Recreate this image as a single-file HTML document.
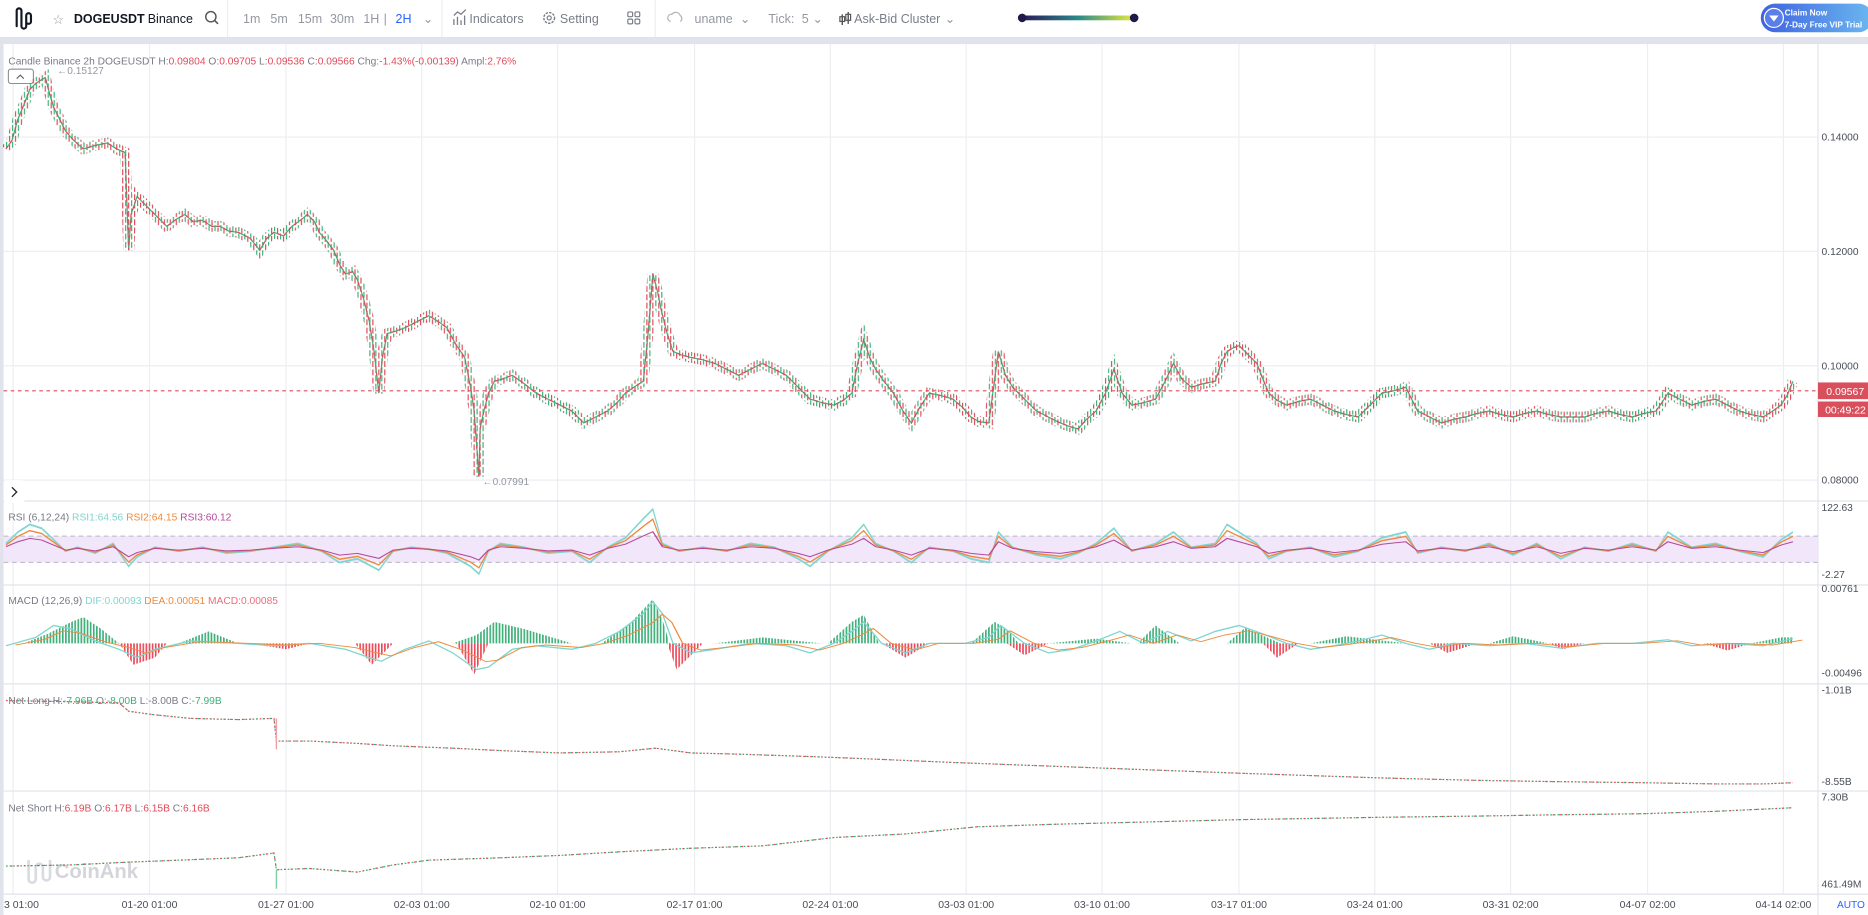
<!DOCTYPE html>
<html><head><meta charset="utf-8"><style>
html,body{margin:0;padding:0;background:#fff;width:1868px;height:915px;overflow:hidden}
svg{display:block}
text{font-family:"Liberation Sans",sans-serif}
</style></head><body>
<svg width="1868" height="915" viewBox="0 0 1568 768" xmlns="http://www.w3.org/2000/svg">
<defs>
<linearGradient id="gb" x1="0" x2="1"><stop offset="0" stop-color="#2b1a5a"/><stop offset=".5" stop-color="#2a8a8a"/><stop offset="1" stop-color="#e8ea3a"/></linearGradient>
<linearGradient id="cl" x1="0" x2="1"><stop offset="0" stop-color="#3f62e0"/><stop offset="1" stop-color="#6bb8f0"/></linearGradient>
<pattern id="pg" width="2.6" height="10" patternUnits="userSpaceOnUse"><rect width="1.4" height="10" fill="#3fb07a"/></pattern>
<pattern id="pr" width="2.6" height="10" patternUnits="userSpaceOnUse"><rect width="1.4" height="10" fill="#ea4a5a"/></pattern>
<pattern id="pc" width="5" height="7" patternUnits="userSpaceOnUse"><rect x="0" y="0" width="1" height="5" fill="#3fb07a"/><rect x="2.5" y="2" width="1" height="5" fill="#e04b5a"/></pattern>
<path id="rsi" d="M5,458 L15,452 25,448 35,450 45,456 55,462 65,460 80,463 95,458 108,470 115,465 130,460 150,462 170,460 190,463 210,462 230,460 250,458 270,462 285,468 300,466 318,472 330,462 345,460 360,461 375,463 395,470 402,474 410,462 420,458 440,460 460,463 480,462 495,468 510,460 525,455 540,445 548,440 556,458 570,462 590,460 610,462 630,458 650,460 670,466 680,470 695,462 715,455 725,448 735,458 750,462 765,468 780,460 800,462 815,466 830,468 838,452 850,460 870,464 890,466 905,463 920,458 935,450 950,462 970,458 985,452 1000,460 1020,458 1030,448 1040,452 1055,458 1065,466 1080,462 1100,460 1120,465 1140,462 1160,455 1180,452 1190,463 1210,460 1230,462 1250,458 1270,464 1290,458 1310,466 1330,460 1350,462 1370,458 1390,462 1400,452 1420,460 1440,458 1460,462 1480,465 1495,456 1505,452" fill="none"/>
<path id="dif" d="M5,542 L30,535 45,525 60,528 80,538 100,545 115,552 130,545 160,538 200,540 230,542 260,540 290,545 310,552 320,555 340,545 360,538 380,548 400,562 410,560 430,545 450,542 480,545 500,540 520,530 540,515 548,505 556,515 565,540 580,548 600,545 630,540 660,542 680,548 700,540 715,530 725,522 740,540 760,548 780,540 810,540 830,535 840,525 860,540 880,548 900,545 920,538 940,530 960,540 980,530 1000,538 1020,530 1040,525 1060,532 1080,540 1100,545 1120,542 1140,538 1160,533 1180,540 1200,545 1220,540 1250,542 1280,540 1310,544 1340,540 1370,540 1400,537 1420,542 1450,540 1480,542 1505,536" fill="none"/>
<path id="price" d="M5,125 L10,118 15,100 20,88 25,75 30,70 38,65 42,80 45,90 50,100 55,110 62,118 70,125 80,122 90,120 98,125 105,128 108,210 110,180 115,165 125,175 132,182 140,190 148,184 155,180 162,186 170,185 178,190 185,190 192,194 200,195 210,200 218,210 224,200 230,195 238,198 245,190 252,185 258,180 264,186 268,195 274,202 280,210 285,222 290,230 296,228 300,235 305,250 310,270 314,295 318,330 321,300 325,280 332,278 340,275 350,270 360,265 368,270 375,275 382,288 390,300 395,325 398,345 402,400 403,360 405,350 410,330 415,320 422,318 430,315 440,322 450,330 460,335 470,340 480,345 490,355 500,350 510,345 518,338 525,330 532,325 540,320 544,280 548,230 552,245 555,260 560,280 565,295 572,298 580,300 590,302 600,305 610,310 620,315 630,310 640,305 650,310 660,315 670,325 680,335 690,338 700,340 708,336 715,330 720,305 725,285 730,300 735,310 742,320 750,330 758,345 765,355 772,342 780,330 790,332 800,335 808,342 815,350 822,354 830,355 834,325 838,295 844,315 850,325 860,335 870,345 880,350 890,355 898,358 905,360 912,352 920,345 928,330 935,310 942,330 950,340 960,338 970,335 978,320 985,305 992,318 1000,325 1010,322 1020,320 1025,305 1030,295 1035,292 1040,290 1048,298 1055,305 1060,318 1065,330 1072,336 1080,340 1090,337 1100,335 1110,340 1120,345 1130,348 1140,350 1150,340 1160,330 1170,328 1180,325 1185,335 1190,345 1200,350 1210,355 1220,352 1230,350 1240,347 1250,345 1260,348 1270,350 1280,347 1290,345 1300,348 1310,350 1320,350 1330,350 1340,347 1350,345 1360,348 1370,350 1380,347 1390,345 1395,338 1400,330 1410,335 1420,340 1430,337 1440,335 1450,340 1460,345 1470,348 1480,350 1488,345 1495,340 1500,332 1505,320" fill="none"/>
</defs>
<rect width="1568" height="768" fill="#fff"/>
<!-- toolbar -->
<rect x="0" y="31" width="1568" height="6" fill="#e0e3eb"/>
<rect x="0" y="37" width="3" height="731" fill="#e0e3eb"/>
<g fill="none" stroke="#131722" stroke-width="1.8" stroke-linecap="round">
<path d="M14,9 v13 M18,9 v13 M14,9 a2,2 0 0 1 4,0 M18,22 a2,2 0 0 0 4,0 v-9 a2,2 0 0 1 4,0 v5 a2,2 0 0 1 -4,0"/>
</g>
<text x="44" y="20" font-size="11" fill="#9598a1">☆</text>
<text x="62" y="19.5" font-size="10.5" font-weight="bold" fill="#131722">DOGEUSDT</text>
<text x="124" y="19.5" font-size="10.5" fill="#131722">Binance</text>
<circle cx="177" cy="14" r="4.3" fill="none" stroke="#555" stroke-width="1.2"/><path d="M180,17 l3,3" stroke="#555" stroke-width="1.3"/>
<line x1="191" y1="0" x2="191" y2="31" stroke="#eceef2"/>
<g font-size="10.5" fill="#9598a1">
<text x="204" y="19.5">1m</text><text x="227" y="19.5">5m</text><text x="250" y="19.5">15m</text><text x="277" y="19.5">30m</text><text x="305" y="19.5">1H</text><text x="322" y="19.5">|</text>
<text x="332" y="19.5" fill="#2962ff">2H</text><text x="355" y="19.5">⌄</text>
</g>
<line x1="371" y1="0" x2="371" y2="31" stroke="#eceef2"/>
<path d="M381,21 v-5 M384,21 v-7 M387,21 v-4 M390,21 v-8 M381,13 l3,-3 3,2 4,-4" stroke="#7a7e89" stroke-width="1.1" fill="none"/>
<text x="394" y="19.5" font-size="10.5" fill="#7a7e89">Indicators</text>
<circle cx="461" cy="15" r="4.5" fill="none" stroke="#7a7e89" stroke-width="1.2" stroke-dasharray="2 1"/><circle cx="461" cy="15" r="1.7" fill="none" stroke="#7a7e89"/>
<text x="470" y="19.5" font-size="10.5" fill="#7a7e89">Setting</text>
<g fill="none" stroke="#7a7e89" stroke-width="1"><rect x="527" y="10" width="4" height="4" rx="1"/><rect x="533" y="10" width="4" height="4" rx="1"/><rect x="527" y="16" width="4" height="4" rx="1"/><rect x="533" y="16" width="4" height="4" rx="1"/></g>
<line x1="550" y1="0" x2="550" y2="31" stroke="#eceef2"/>
<path d="M563,18 a3,3 0 0 1 1,-6 a4,4 0 0 1 7,1 a3,3 0 0 1 0,5" fill="none" stroke="#b0b3bb" stroke-width="1"/>
<g font-size="10.5" fill="#9598a1"><text x="583" y="19.5">uname</text><text x="621" y="19.5">⌄</text><text x="645" y="19.5">Tick:</text><text x="673" y="19.5">5</text><text x="682" y="19.5">⌄</text></g>
<path d="M707,12 v9 M712,10 v10" stroke="#555" stroke-width="1.2"/><rect x="705" y="14" width="4" height="4" fill="none" stroke="#555"/><rect x="710" y="12" width="4" height="5" fill="none" stroke="#555"/>
<text x="717" y="19.5" font-size="10.5" fill="#7a7e89">Ask-Bid Cluster</text><text x="793" y="19.5" font-size="10.5" fill="#9598a1">⌄</text>
<rect x="858" y="13" width="94" height="4" fill="url(#gb)"/><circle cx="858" cy="15" r="3.6" fill="#1e1a4a"/><circle cx="952" cy="15" r="3.6" fill="#1e1a4a"/>
<rect x="1478" y="3" width="94" height="24" rx="12" fill="url(#cl)"/>
<circle cx="1489" cy="15" r="8" fill="#5b7fe8" stroke="#fff" stroke-width="1"/><path d="M1485,13 h8 l-4,5 z" fill="#fff"/>
<text x="1498" y="13" font-size="7" font-weight="bold" fill="#fff">Claim Now</text><text x="1498" y="23" font-size="7" font-weight="bold" fill="#fff">7-Day Free VIP Trial</text>
<!-- grid -->
<g stroke="#eceef2" stroke-width="1">
<path d="M11,37v713 M125.5,37v713 M240,37v713 M354,37v713 M468,37v713 M583,37v713 M697,37v713 M811,37v713 M925,37v713 M1040,37v713 M1154,37v713 M1268,37v713 M1383,37v713 M1497,37v713"/>
<path d="M3,115h1523 M3,211h1523 M3,307h1523 M3,403h1523"/>
</g>
<g stroke="#e0e3eb" stroke-width="1"><path d="M3,420.5h1565 M3,491h1565 M3,574h1565 M3,664h1565 M3,750.5h1565 M1526,37v731"/></g>
<!-- main header -->
<text x="7" y="54" font-size="8.6" fill="#787b86">Candle  Binance 2h DOGEUSDT H:<tspan fill="#e04b5a">0.09804</tspan>  O:<tspan fill="#e04b5a">0.09705</tspan>  L:<tspan fill="#e04b5a">0.09536</tspan>  C:<tspan fill="#e04b5a">0.09566</tspan> Chg:<tspan fill="#e04b5a">-1.43%(-0.00139)</tspan> Ampl:<tspan fill="#e04b5a">2.76%</tspan></text>
<rect x="7" y="58" width="21" height="12" rx="2" fill="#fff" stroke="#7a7e89" stroke-width=".8"/><path d="M14,66 l3,-3 3,3" fill="none" stroke="#555" stroke-width=".9"/>
<text x="48" y="62" font-size="8.5" fill="#9598a1">←0.15127</text>
<text x="405" y="407" font-size="8.5" fill="#9598a1">←0.07991</text>
<rect x="3" y="403" width="18" height="19" rx="3" fill="#fff"/><path d="M10,409 l4,4 -4,4" fill="none" stroke="#222" stroke-width="1.1"/>
<!-- price -->
<line x1="3" y1="328" x2="1526" y2="328" stroke="#e04b5a" stroke-width=".9" stroke-dasharray="3 3"/>
<use href="#price" stroke="url(#pc)" stroke-width="9"/>
<use href="#price" stroke="#3fb07a" stroke-width="1"/>
<use href="#price" stroke="#e04b5a" stroke-width="1" stroke-dasharray="3 3"/>
<rect x="1526" y="321" width="42" height="14" fill="#d9505c"/><text x="1533" y="331.5" font-size="8.8" fill="#fff">0.09567</text>
<rect x="1526" y="337" width="42" height="13" fill="#d9505c"/><text x="1532" y="347" font-size="8.8" fill="#fff">00:49:22</text>
<g font-size="8.6" fill="#4a4e59">
<text x="1529" y="118">0.14000</text><text x="1529" y="214">0.12000</text><text x="1529" y="310">0.10000</text><text x="1529" y="406">0.08000</text>
<text x="1529" y="429">122.63</text><text x="1529" y="485">-2.27</text><text x="1529" y="497">0.00761</text><text x="1529" y="568">-0.00496</text>
<text x="1529" y="582">-1.01B</text><text x="1529" y="659">-8.55B</text><text x="1529" y="672">7.30B</text><text x="1529" y="745">461.49M</text>
</g>
<!-- RSI -->
<text x="7" y="437" font-size="8.6" fill="#787b86">RSI  (6,12,24)  <tspan fill="#7fd6d0">RSI1:64.56</tspan>  <tspan fill="#f08a3c">RSI2:64.15</tspan>  <tspan fill="#b54a9a">RSI3:60.12</tspan></text>
<rect x="3" y="450" width="1523" height="22" fill="#f1e6fa"/>
<path d="M3,450h1523 M3,472h1523" stroke="#b8b8c4" stroke-dasharray="4 3" stroke-width=".8"/>
<use href="#rsi" stroke="#7fd6d0" stroke-width="1" transform="translate(0,461) scale(1,1.6) translate(0,-461)"/>
<use href="#rsi" stroke="#f08a3c" stroke-width="1" transform="translate(0,461) scale(1,1.2) translate(0,-461)"/>
<use href="#rsi" stroke="#b54a9a" stroke-width="1.2" transform="translate(0,461) scale(1,0.7) translate(0,-461)"/>
<!-- MACD -->
<text x="7" y="507" font-size="8.6" fill="#787b86">MACD  (12,26,9)  <tspan fill="#7fd6d0">DIF:0.00093</tspan>  <tspan fill="#f08a3c">DEA:0.00051</tspan>  <tspan fill="#ef6d7a">MACD:0.00085</tspan></text>
<g fill="url(#pg)">
<path d="M20,540 L40,532 60,522 70,518 85,528 100,540Z"/><path d="M150,540 L175,530 200,540Z"/>
<path d="M380,540 L400,533 415,522 440,528 480,540Z"/><path d="M505,540 L530,522 548,503 556,520 562,540Z"/>
<path d="M695,540 L715,522 725,516 738,540Z"/><path d="M815,540 L835,522 845,528 855,540Z"/>
<path d="M955,540 L970,525 990,540Z"/><path d="M1030,540 L1045,527 1075,540Z"/><path d="M1100,540 L1130,534 1180,540Z"/>
<path d="M1250,540 L1270,534 1300,540Z"/><path d="M1470,540 L1495,535 1505,535 1505,540Z"/><path d="M600,540 L640,535 690,540Z"/><path d="M880,540 L920,536 950,540Z"/>
</g>
<g fill="url(#pr)">
<path d="M100,540 L112,558 130,552 140,540Z"/><path d="M298,540 L312,558 330,540Z"/><path d="M383,540 L398,566 410,540Z"/>
<path d="M560,540 L568,562 590,540Z"/><path d="M740,540 L760,552 780,540Z"/><path d="M845,540 L860,550 880,540Z"/>
<path d="M1060,540 L1072,552 1090,540Z"/><path d="M1200,540 L1215,548 1240,540Z"/><path d="M1300,540 L1312,545 1330,540Z"/><path d="M1430,540 L1450,546 1470,540Z"/><path d="M210,540 L240,545 260,540Z"/>
</g>
<use href="#dif" stroke="#7fd6d0" stroke-width="1.1"/>
<use href="#dif" stroke="#f08a3c" stroke-width="1.1" transform="translate(8,540) scale(1,0.7) translate(0,-540)"/>
<!-- Net Long -->
<text x="7" y="591" font-size="8.6" fill="#787b86">Net Long   H:<tspan fill="#3fb07a">-7.96B</tspan>  O:<tspan fill="#3fb07a">-8.00B</tspan>  L:-8.00B  C:<tspan fill="#3fb07a">-7.99B</tspan></text>
<polyline points="5,588 60,589 100,590 108,597 130,600 160,603 200,604 230,603 232,622 260,622 300,624 330,626 380,628 420,630 470,632 520,631 550,628 580,632 620,633 680,635 730,637 800,640 880,643 960,646 1040,649 1100,651 1160,653 1240,655 1300,656 1380,657 1440,658 1480,658 1505,657" fill="none" stroke="#e04b5a" stroke-width="1" stroke-dasharray="1.5 1.5"/>
<polyline points="5,588 60,589 100,590 108,597 130,600 160,603 200,604 230,603 232,622 260,622 300,624 330,626 380,628 420,630 470,632 520,631 550,628 580,632 620,633 680,635 730,637 800,640 880,643 960,646 1040,649 1100,651 1160,653 1240,655 1300,656 1380,657 1440,658 1480,658 1505,657" fill="none" stroke="#3fb07a" stroke-width="1" stroke-dasharray="1.5 4" stroke-dashoffset="1.5"/>
<line x1="232" y1="603" x2="232" y2="629" stroke="#f0a0a8" stroke-width="1.2"/>
<!-- Net Short -->
<text x="7" y="681" font-size="8.6" fill="#787b86">Net Short   H:<tspan fill="#e04b5a">6.19B</tspan>  O:<tspan fill="#e04b5a">6.17B</tspan>  L:<tspan fill="#e04b5a">6.15B</tspan>  C:<tspan fill="#e04b5a">6.16B</tspan></text>
<g opacity=".35" fill="none" stroke="#9598a1" stroke-width="2.2"><path d="M24,722 v16 a3,3 0 0 0 6,0 v-10 a3,3 0 0 1 6,0 v8 a3,3 0 0 0 6,0 v-14"/></g>
<text x="46" y="737" font-size="17" font-weight="bold" fill="#c9cbd1" opacity=".8">CoinAnk</text>
<polyline points="5,727 60,726 100,724 150,722 200,720 230,716 232,730 260,729 300,732 330,726 360,722 420,720 470,718 520,715 580,712 640,710 700,703 760,700 820,694 880,692 960,690 1040,688 1100,687 1160,686 1240,685 1300,684 1380,683 1440,681 1505,678" fill="none" stroke="#3fb07a" stroke-width="1" stroke-dasharray="1.5 1.5"/>
<polyline points="5,727 60,726 100,724 150,722 200,720 230,716 232,730 260,729 300,732 330,726 360,722 420,720 470,718 520,715 580,712 640,710 700,703 760,700 820,694 880,692 960,690 1040,688 1100,687 1160,686 1240,685 1300,684 1380,683 1440,681 1505,678" fill="none" stroke="#e04b5a" stroke-width="1" stroke-dasharray="1.5 4" stroke-dashoffset="1.5"/>
<line x1="232" y1="730" x2="232" y2="746" stroke="#7fd0a0" stroke-width="1.2"/>
<!-- x axis -->
<g font-size="8.8" fill="#4a4e59" text-anchor="middle">
<text x="18" y="762">3 01:00</text><text x="125.5" y="762">01-20 01:00</text><text x="240" y="762">01-27 01:00</text><text x="354" y="762">02-03 01:00</text><text x="468" y="762">02-10 01:00</text><text x="583" y="762">02-17 01:00</text><text x="697" y="762">02-24 01:00</text><text x="811" y="762">03-03 01:00</text><text x="925" y="762">03-10 01:00</text><text x="1040" y="762">03-17 01:00</text><text x="1154" y="762">03-24 01:00</text><text x="1268" y="762">03-31 02:00</text><text x="1383" y="762">04-07 02:00</text><text x="1497" y="762">04-14 02:00</text>
</g>
<text x="1542" y="762" font-size="8.5" fill="#2962ff">AUTO</text>
</svg>
</body></html>
